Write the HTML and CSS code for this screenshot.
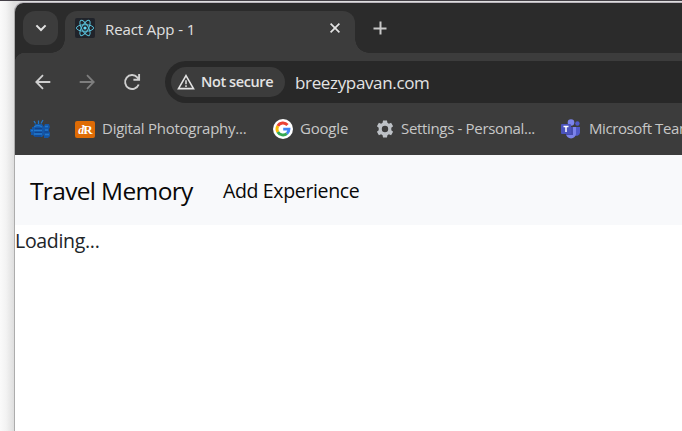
FILE: index.html
```
<!DOCTYPE html>
<html lang="en">
<head>
<meta charset="utf-8">
<title>React App - 1</title>
<link rel="stylesheet" href="styles.css">
</head>
<body>
<div class="window">
  <header class="tabstrip">
    <button class="tab-search" aria-label="Search tabs"><svg width="14" height="10" viewBox="0 0 14 10"><path d="M2.4 2.4 7 7l4.600-4.600" fill="none" stroke="#e3e3e3" stroke-width="2"/></svg></button>
    <div class="tab">
      <svg class="react" width="20" height="20" viewBox="0 0 20 20"><rect width="20" height="20" rx="2" fill="#20232a"/><g fill="none" stroke="#58bfd8" stroke-width="1"><ellipse cx="10" cy="10" rx="8.600" ry="3.300"/><ellipse cx="10" cy="10" rx="8.600" ry="3.300" transform="rotate(60 10 10)"/><ellipse cx="10" cy="10" rx="8.600" ry="3.300" transform="rotate(120 10 10)"/></g><circle cx="10" cy="10" r="1.600" fill="#61dafb"/></svg>
      <span class="tab-title">React App - 1</span>
      <svg class="close" width="12" height="12" viewBox="0 0 12 12"><path d="m1.600 1.600 8.800 8.800m0-8.800-8.800 8.800" stroke="#e3e3e3" stroke-width="1.700"/></svg>
    </div>
    <svg class="plus" width="14" height="14" viewBox="0 0 14 14"><path d="M7.500 .5v13M.5 7.500h13" stroke="#c8c8c8" stroke-width="2"/></svg>
  </header>
  <div class="toolbar">
    <svg class="arrow" width="16" height="16" viewBox="0 0 16 16"><path d="M15.300 8H1.500M8 1.200 1.300 8 8 14.800" fill="none" stroke="#cfcfcf" stroke-width="1.800"/></svg>
    <svg class="arrow" width="16" height="16" viewBox="0 0 16 16"><path d="M.7 8h13.800M8 1.200 14.700 8 8 14.800" fill="none" stroke="#7e7e7e" stroke-width="1.800"/></svg>
    <svg class="reload" width="18" height="18" viewBox="0 0 18 18"><path d="M15.700 11.500A7 7 0 1 1 14.300 4.300L15.900 6M16.100 1v5.700h-5.700" fill="none" stroke="#cfcfcf" stroke-width="1.900"/></svg>
    <div class="omnibox">
      <div class="chip">
        <svg width="18" height="16" viewBox="0 0 18 16"><path d="M9 1.700 16.500 14.600h-15Z" fill="none" stroke="#e3e3e3" stroke-width="1.600"/><path d="M9 6.200v4M9 11.200v1.700" stroke="#e3e3e3" stroke-width="1.500"/></svg>
        <span class="chip-label">Not secure</span>
      </div>
      <span class="url">breezypavan.com</span>
    </div>
  </div>
  <nav class="bookmarks">
    <svg class="blue-mark" width="20" height="19" viewBox="0 0 20 19"><path d="M5 5h7l2 3v8l-2 2H5l-2-2H1v-3H0v-3h2V8h2ZM15 5h4l1 3-1 2v2l1 2v3l-2 2h-4v-3l-1-2 1-2-1-3Z" fill="#1456a6"/><path d="M5.500 4.500 4 2M8.500 5V1.500M11 4.500 13 1M4 8q4-3 8 0M4 11.500h8M4 15h8M1 11.500h2M15 7.500h3M15 11h3M15 15.500h4" fill="none" stroke="#2278cb" stroke-width="1.300"/><path d="M5 9.700h7M5 13.300h7M14.500 13h4M5 17h6" stroke="#123f85"/></svg>
    <a class="bookmark photo"><span class="photo-icon"><i>d</i><b>R</b></span><span class="label digital">Digital Photography...</span></a>
    <a class="bookmark google"><svg width="20" height="20" viewBox="0 0 20 20"><circle cx="10" cy="10" r="10" fill="#fff"/><g fill="none" stroke-width="2.900"><path d="M14.500 6A6 6 0 0 0 4.800 7" stroke="#ea4335"/><path d="M4.800 7a6 6 0 0 0 0 6" stroke="#fbbc05"/><path d="M4.800 13a6 6 0 0 0 9.100 1.600" stroke="#34a853"/><path d="M13.900 14.600A6 6 0 0 0 16 10.100h-5.800" stroke="#4285f4"/></g></svg><span class="label google-label">Google</span></a>
    <a class="bookmark settings"><svg width="18" height="18" viewBox="0 0 18 18"><path fill="#bdc1c6" fill-rule="evenodd" d="m7 .5-.4 2.300-1.500.9-2.200-.9-2 3.500 1.800 1.500v2.400L.9 11.700l2 3.500 2.200-.9 1.500.9.400 2.300h4l.4-2.300 1.500-.9 2.200.9 2-3.500-1.800-1.500V7.800l1.800-1.500-2-3.500-2.200.9-1.500-.9L11 .5ZM9 5.800a3.200 3.200 0 1 1 0 6.400 3.200 3.200 0 0 1 0-6.400Z"/></svg><span class="label settings-label">Settings - Personal...</span></a>
    <a class="bookmark teams"><svg width="20" height="20" viewBox="0 0 20 20"><circle cx="10" cy="3.500" r="3.300" fill="#7b83eb"/><circle cx="16.400" cy="4.500" r="2.200" fill="#5059c9"/><path d="M13 8h6v5.500a3.500 3.500 0 0 1-5 3Z" fill="#5059c9"/><path d="M5 8h10v6.500a5 5 0 0 1-10 0Z" fill="#7b83eb"/><path d="M9 8h3v8H5v-2h4Z" fill="#464cae"/><rect x="0" y="5" width="10" height="10" rx="1" fill="#4b53bc"/><path d="M2.500 7.500h5M5 7.500v5.500" stroke="#fff" stroke-width="1.500"/></svg><span class="label teams-label">Microsoft Teams</span></a>
  </nav>
  <main class="page">
    <nav class="navbar"><a class="brand">Travel Memory</a><a class="nav-link">Add Experience</a></nav>
    <p class="loading">Loading...</p>
  </main>
</div>
</body>
</html>
```
FILE: styles.css
```
* { box-sizing: border-box; }
body {
  margin: 0;
  width: 682px;
  height: 431px;
  overflow: hidden;
  padding: 2px 0 0 14px;
  border-top: 1px solid #444047;
  background: linear-gradient(90deg, #fafafa 0, #f3f3f3 6px, #dedede 14px);
  font-family: "Open Sans", "Noto Sans", sans-serif;
}
svg { display: block; flex: none; }
span, a { white-space: nowrap; }
.window {
  width: 700px;
  height: 430px;
  border-left: 1px solid #acacac;
  border-radius: 9px 0 0 0;
  background: #fff;
  overflow: hidden;
  box-shadow: 0 -1px 0 #b9b4bc;
}
.tabstrip { height: 50px; display: flex; background: #2b2b2b; padding: 8px 0 0 8px; }
.tab-search {
  width: 35px; height: 34px; border: 0; border-radius: 12px;
  background: #3c3c3c; padding: 0;
  display: flex; align-items: center; justify-content: center;
}
.tab {
  position: relative;
  width: 290px; height: 42px; margin-left: 7px;
  padding: 7px 14px 0 10px;
  display: flex; align-items: flex-start;
  border-radius: 12px 12px 0 0; background: #3c3c3c;
}
.tab::before, .tab::after {
  content: ""; position: absolute; bottom: 0; width: 14px; height: 14px;
}
.tab::before { right: 100%; background: radial-gradient(circle at 0 0, transparent 13.500px, #3c3c3c 14px); }
.tab::after { left: 100%; background: radial-gradient(circle at 100% 0, transparent 13.500px, #3c3c3c 14px); }
.tab-title { margin-left: 10px; font-size: 15px; line-height: 22px; letter-spacing: -.1px; color: #e0e0e0; }
.close { margin: 4px 0 0 auto; }
.plus { margin: 10px 0 0 18px; }
.toolbar {
  height: 58px; display: flex; align-items: center;
  background: radial-gradient(circle at 10px 10px, #3c3c3c 10px, #2b2b2b 10.500px) 0 0 / 10px 10px no-repeat, #3c3c3c;
  padding-left: 20px;
}
.arrow + .arrow { margin-left: 28px; }
.reload { margin-left: 28px; }
.omnibox {
  width: 550px; height: 42px; margin-left: 24px; padding: 6px;
  border-radius: 21px; background: #282828;
  display: flex; align-items: center;
}
.chip { width: 114px; height: 30px; border-radius: 15px; background: #3c3c3c; display: flex; align-items: center; padding-left: 6px; }
.chip-label { margin: -2px 0 0 6px; font-size: 14.500px; font-weight: 650; letter-spacing: -.4px; color: #e3e3e3; }
.url { margin-left: 10px; font-size: 17px; letter-spacing: -.35px; color: #e3e3e3; }
.bookmarks { height: 44px; background: #3c3c3c; position: relative; display: flex; align-items: flex-start; padding: 8px 0 0 15px; }
.bookmark { display: flex; align-items: center; height: 20px; color: #c7c7c7; }
.photo { margin-left: 25px; width: 198px; }
.google { width: 103px; }
.settings { width: 185px; }
.label { font-size: 15px; line-height: 20px; margin: -2px 0 0 7px; }
.digital { letter-spacing: -.25px; }
.google-label { letter-spacing: -.2px; }
.settings-label { letter-spacing: -.33px; }
.teams-label { letter-spacing: -.4px; margin-left: 8px; }
.photo-icon {
  width: 20px; height: 17px; border-radius: 2px; background: #de6b05; color: #fff;
  font: bold 12px/17px "Liberation Serif", serif; text-align: center; letter-spacing: -1px;
}
.photo-icon b { font-size: 13px; }
.page { background: #fff; }
.navbar { height: 70px; background: #f8f9fb; display: flex; align-items: flex-start; padding: 20px 0 0 15px; color: #080808; }
.brand { width: 193px; font-size: 24.500px; line-height: 32px; letter-spacing: -.65px; }
.nav-link { font-size: 19.500px; line-height: 32px; letter-spacing: -.35px; }
.loading { margin: 0; font-size: 19.500px; line-height: 32px; letter-spacing: -.3px; color: #212529; }
```
